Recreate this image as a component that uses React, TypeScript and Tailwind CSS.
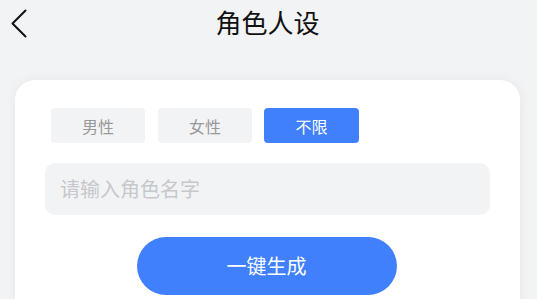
import React from "react";

export default function App() {
  const font = { fontFamily: '"Noto Sans CJK SC", "Noto Sans", sans-serif' };
  return (
    <div className="w-[537px] h-[299px] overflow-hidden bg-[#f2f3f5]" style={font}>
      <div className="relative h-[44px] flex items-center justify-center">
        <svg className="absolute left-[10px] top-[9px]" width="18" height="30" viewBox="0 0 18 30" fill="none">
          <path d="M15.5 1.5 L2.5 14.5 L15.5 27.5" stroke="#111" strokeWidth="2" strokeLinecap="round" strokeLinejoin="round" />
        </svg>
        <div className="text-[26px] leading-none text-[#111] mt-[-1px] ml-[-2px]">角色人设</div>
      </div>
      <div className="ml-[15px] mt-[36px] w-[505px] h-[260px] bg-white rounded-[20px] shadow-[0_0_12px_rgba(0,0,0,0.05)] px-[30px] pt-[28px]">
        <div className="flex pl-[6px]">
          <div className="w-[94px] h-[35px] rounded-[4px] bg-[#f2f3f5] text-[#999] text-[16px] flex items-center justify-center">男性</div>
          <div className="ml-[13px] w-[94px] h-[35px] rounded-[4px] bg-[#f2f3f5] text-[#999] text-[16px] flex items-center justify-center">女性</div>
          <div className="ml-[12px] w-[95px] h-[35px] rounded-[4px] bg-[#4080fd] text-white text-[16px] flex items-center justify-center">不限</div>
        </div>
        <div className="mt-[20px] h-[52px] rounded-[10px] bg-[#f2f3f5] flex items-center px-[15px]">
          <span className="text-[20px] text-[#c6c8cc]">请输入角色名字</span>
        </div>
        <div className="mt-[22px] flex justify-center">
          <div className="w-[260px] h-[58px] rounded-full bg-[#4080fd] text-white text-[20px] flex items-center justify-center ml-[-2px]">一键生成</div>
        </div>
      </div>
    </div>
  );
}
